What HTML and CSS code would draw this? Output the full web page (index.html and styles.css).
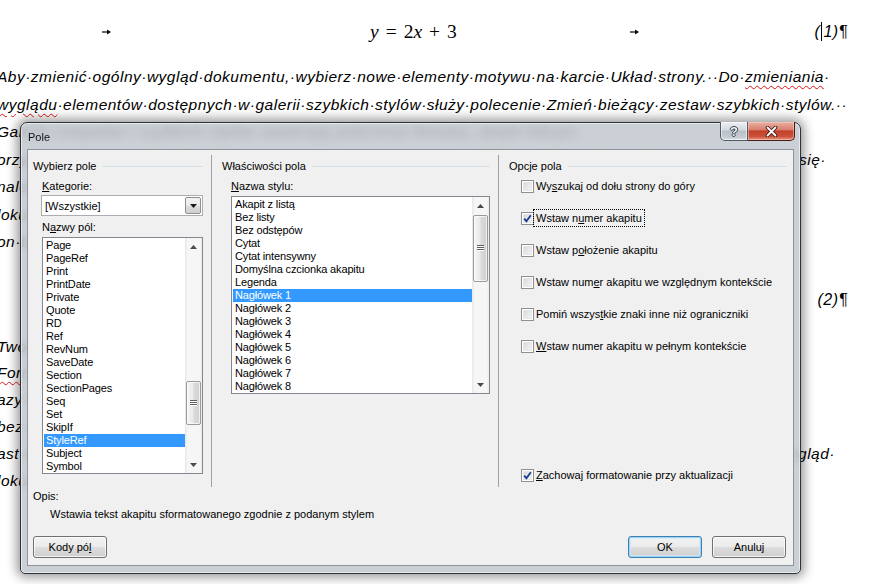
FILE: index.html
```html
<!DOCTYPE html>
<html lang="pl">
<head>
<meta charset="utf-8">
<title>Pole</title>
<link rel="stylesheet" href="styles.css">
</head>
<body>
<div class="doc">
  <div class="eq eq1">
    <span class="tab tab1"><svg width="9" height="6" viewBox="0 0 9 6"><path d="M0 3 H6" stroke="#000" stroke-width="1.2"/><path d="M5 0.5 L9 3 L5 5.5 Z" fill="#000"/></svg></span>
    <span class="math"><i>y</i><span class="op">=</span>2<i>x</i><span class="op">+</span>3</span>
    <span class="tab tab2"><svg width="9" height="6" viewBox="0 0 9 6"><path d="M0 3 H6" stroke="#000" stroke-width="1.2"/><path d="M5 0.5 L9 3 L5 5.5 Z" fill="#000"/></svg></span>
    <span class="num">(<span class="caret"></span>1)¶</span>
  </div>
  <div class="para p1">
    <div class="ln">Aby·zmienić·ogólny·wygląd·dokumentu,·wybierz·nowe·elementy·motywu·na·karcie·Układ·strony.··Do·<span class="sq">zmieniania</span>·</div>
    <div class="ln"><span class="sq">wyglądu</span>·elementów·dostępnych·w·galerii·szybkich·stylów·służy·polecenie·Zmień·bieżący·zestaw·szybkich·stylów.··</div>
    <div class="ln">Galerie·motywów·i·szybkich·stylów·zawierają·polecenia·Resetuj,·dzięki·którym·</div>
    <div class="ln split wa"><span>orzywrócić·pierwotny·wygląd·dokumentu·zawarty·w·bieżącym·szablonie,·kiedy·tylko·zechce</span><span>się·</span></div>
    <div class="ln">naleźć·w·galerii·odpowiedni·styl·dla·zaznaczonego·tekstu.·</div>
    <div class="ln">lokumentu·można·zmienić·za·pomocą·poleceń·karty·Narzędzia·główne.·</div>
    <div class="ln">on·bieżącego·motywu.¶</div>
  </div>
  <div class="eq eq2">
    <span class="num">(2)¶</span>
  </div>
  <div class="para p2">
    <div class="ln">Twoje·dokumenty·mogą·korzystać·z·wielu·stylów·i·motywów.·</div>
    <div class="ln"><span class="sq">Formatowanie</span>·tekstu·można·zmienić·bezpośrednio·na·karcie.·</div>
    <div class="ln">azy·elementów·z·galerii·szybkich·stylów.·</div>
    <div class="ln">bez·zmiany·układu·całego·dokumentu·i·jego·wyglądu.·</div>
    <div class="ln split wb"><span>ast·tego·możesz·przywrócić·pierwotny·w</span><span>ygląd·</span></div>
    <div class="ln">lokumentu·zawarty·w·bieżącym·szablonie.¶</div>
  </div>
</div>

<div class="dialog">
  <div class="titlebar">
    <span class="title">Pole</span>
    <div class="tb-btns">
      <div class="tb help"><span class="q">?</span></div>
      <div class="tb close">
        <svg width="13" height="11" viewBox="0 0 13 11"><path d="M2.5 1.5 L10.5 9.5 M10.5 1.5 L2.5 9.5" stroke="#3a1710" stroke-width="3.6" stroke-linecap="round"/><path d="M2.5 1.5 L10.5 9.5 M10.5 1.5 L2.5 9.5" stroke="#ffffff" stroke-width="1.8" stroke-linecap="round"/></svg>
      </div>
    </div>
  </div>
  <div class="client">
    <div class="cols">
      <div class="col col1">
        <div class="gh">Wybierz pole</div>
        <div class="lbl"><u>K</u>ategorie:</div>
        <div class="combo">
          <span class="combo-text">[Wszystkie]</span>
          <span class="combo-btn"><svg width="7" height="4" viewBox="0 0 7 4"><path d="M0 0 H7 L3.5 4 Z" fill="#1a1a1a"/></svg></span>
        </div>
        <div class="lbl lbl2">N<u>a</u>zwy pól:</div>
        <div class="list list1">
          <div class="items">
            <div class="it">Page</div>
            <div class="it">PageRef</div>
            <div class="it">Print</div>
            <div class="it">PrintDate</div>
            <div class="it">Private</div>
            <div class="it">Quote</div>
            <div class="it">RD</div>
            <div class="it">Ref</div>
            <div class="it">RevNum</div>
            <div class="it">SaveDate</div>
            <div class="it">Section</div>
            <div class="it">SectionPages</div>
            <div class="it">Seq</div>
            <div class="it">Set</div>
            <div class="it">SkipIf</div>
            <div class="it sel">StyleRef</div>
            <div class="it">Subject</div>
            <div class="it">Symbol</div>
          </div>
          <div class="sb">
            <div class="arr"><svg width="7" height="4" viewBox="0 0 7 4"><path d="M0 4 H7 L3.5 0 Z" fill="#4a4a4a"/></svg></div>
            <div class="track"><div class="thumb thumb1"><span class="grip"></span></div></div>
            <div class="arr"><svg width="7" height="4" viewBox="0 0 7 4"><path d="M0 0 H7 L3.5 4 Z" fill="#4a4a4a"/></svg></div>
          </div>
        </div>
      </div>

      <div class="col col2">
        <div class="gh">Właściwości pola</div>
        <div class="lbl"><u>N</u>azwa stylu:</div>
        <div class="list list2">
          <div class="items">
            <div class="it">Akapit z listą</div>
            <div class="it">Bez listy</div>
            <div class="it">Bez odstępów</div>
            <div class="it">Cytat</div>
            <div class="it">Cytat intensywny</div>
            <div class="it">Domyślna czcionka akapitu</div>
            <div class="it">Legenda</div>
            <div class="it sel">Nagłówek 1</div>
            <div class="it">Nagłówek 2</div>
            <div class="it">Nagłówek 3</div>
            <div class="it">Nagłówek 4</div>
            <div class="it">Nagłówek 5</div>
            <div class="it">Nagłówek 6</div>
            <div class="it">Nagłówek 7</div>
            <div class="it">Nagłówek 8</div>
          </div>
          <div class="sb">
            <div class="arr"><svg width="7" height="4" viewBox="0 0 7 4"><path d="M0 4 H7 L3.5 0 Z" fill="#4a4a4a"/></svg></div>
            <div class="track"><div class="thumb thumb2"><span class="grip"></span></div></div>
            <div class="arr"><svg width="7" height="4" viewBox="0 0 7 4"><path d="M0 0 H7 L3.5 4 Z" fill="#4a4a4a"/></svg></div>
          </div>
        </div>
      </div>

      <div class="col col3">
        <div class="gh">Opcje pola</div>
        <div class="opt first"><span class="cb"></span><span class="ol">Wy<u>s</u>zukaj od dołu strony do góry</span></div>
        <div class="opt"><span class="cb on"><svg width="9" height="9" viewBox="0 0 9 9"><path d="M1.2 4.6 L3.4 7.2 L7.8 1.2" fill="none" stroke="#1f3f8f" stroke-width="1.9"/></svg></span><span class="ol focus">Wstaw n<u>u</u>mer akapitu</span></div>
        <div class="opt"><span class="cb"></span><span class="ol">Wstaw p<u>o</u>łożenie akapitu</span></div>
        <div class="opt"><span class="cb"></span><span class="ol">Wstaw num<u>e</u>r akapitu we względnym kontekście</span></div>
        <div class="opt"><span class="cb"></span><span class="ol">Pomiń wszys<u>t</u>kie znaki inne niż ograniczniki</span></div>
        <div class="opt"><span class="cb"></span><span class="ol"><u>W</u>staw numer akapitu w pełnym kontekście</span></div>
        <div class="opt last"><span class="cb on"><svg width="9" height="9" viewBox="0 0 9 9"><path d="M1.2 4.6 L3.4 7.2 L7.8 1.2" fill="none" stroke="#1f3f8f" stroke-width="1.9"/></svg></span><span class="ol"><u>Z</u>achowaj formatowanie przy aktualizacji</span></div>
      </div>
    </div>

    <div class="opis">Opis:</div>
    <div class="desc">Wstawia tekst akapitu sformatowanego zgodnie z podanym stylem</div>

    <div class="btnrow">
      <button class="btn">Kody pó<u>l</u></button>
      <button class="btn ok">OK</button>
      <button class="btn">Anuluj</button>
    </div>
  </div>
</div>
</body>
</html>
```

FILE: styles.css
```css
html, body {
  margin: 0;
  padding: 0;
}
body {
  width: 881px;
  height: 584px;
  overflow: hidden;
  background: #ffffff;
  position: relative;
  font-family: "Liberation Sans", Arial, sans-serif;
}

/* ---------- document behind ---------- */
.doc {
  width: 848px;
  padding-top: 18px;
  color: #000;
  font-family: "Liberation Sans", Arial, sans-serif;
  font-style: italic;
  font-size: 15.5px;
  letter-spacing: 0.5px;
}
.eq {
  display: flex;
  align-items: center;
  height: 28px;
  line-height: 28px;
  white-space: nowrap;
}
.tab {
  display: inline-flex;
  align-items: center;
  width: 9px;
}
.tab svg { display: block; }
.tab1 { margin-left: 102px; }
.math {
  margin-left: 259px;
  font-family: "Liberation Serif", serif;
  font-style: normal;
  font-size: 19.5px;
  letter-spacing: 0;
}
.math i { font-style: italic; }
.op { margin: 0 7px; }
.tab2 { margin-left: 173px; }
.num {
  margin-left: auto;
  font-size: 16px;
  letter-spacing: 0.6px;
}
.caret {
  display: inline-block;
  width: 1px;
  height: 19px;
  background: #000;
  vertical-align: -4px;
  margin: 0 1px;
}
.para {
  margin-left: -3px;
  white-space: nowrap;
}
.p1 {
  margin-top: 17px;
  line-height: 27.5px;
}
.eq2 {
  margin-top: 30px;
}
.p2 {
  margin-top: 20px;
  line-height: 26.9px;
}
.ln.split {
  display: flex;
  justify-content: space-between;
}
.wa { width: 829px; }
.wb { width: 838px; }
.sq {
  text-decoration: underline wavy #e01010;
  text-decoration-thickness: 1px;
  text-underline-offset: 3px;
}

/* ---------- dialog ---------- */
.dialog {
  position: absolute;
  left: 20px;
  top: 122px;
  width: 781px;
  height: 452px;
  box-sizing: border-box;
  border: 1px solid #2d323a;
  border-radius: 7px 7px 5px 5px;
  background: rgba(192, 198, 205, 0.82);
  -webkit-backdrop-filter: blur(5px);
  backdrop-filter: blur(5px);
  box-shadow: 0 0 11px 3px rgba(0, 0, 0, 0.42), inset 0 0 0 1px rgba(255, 255, 255, 0.55);
  padding: 0 6px 7px 6px;
  display: flex;
  flex-direction: column;
  font-size: 11px;
  color: #000;
  letter-spacing: 0;
}
.titlebar {
  height: 26px;
  flex: none;
  display: flex;
  align-items: flex-start;
}
.title {
  margin: 7px 0 0 1px;
  font-size: 11px;
  line-height: 14px;
  color: #111;
}
.tb-btns {
  margin-left: auto;
  margin-top: -1px;
  margin-right: -1px;
  display: flex;
}
.tb {
  height: 19px;
  box-sizing: border-box;
  display: flex;
  align-items: center;
  justify-content: center;
}
.help {
  width: 28px;
  border: 1px solid #535a63;
  border-top: none;
  border-radius: 0 0 0 5px;
  background: linear-gradient(#eef0f3 0%, #d3d8de 45%, #b9c0c8 50%, #c6ccd3 85%, #dfe3e7 100%);
  box-shadow: inset 0 0 0 1px rgba(255, 255, 255, 0.55);
}
.q {
  font-weight: bold;
  font-size: 13px;
  color: #f2f2f2;
  text-shadow: 1px 0 #3a4350, -1px 0 #3a4350, 0 1px #3a4350, 0 -1px #3a4350;
  line-height: 13px;
}
.close {
  width: 47px;
  border: 1px solid #4a1c14;
  border-top: none;
  border-left: none;
  border-radius: 0 0 5px 0;
  background: linear-gradient(#eab0a3 0%, #d9806f 42%, #c2412b 50%, #cc5039 80%, #e39a85 100%);
  box-shadow: inset 0 0 0 1px rgba(255, 220, 210, 0.45);
}
.close svg { display: block; }

.client {
  flex: 1;
  border: 1px solid #8c939b;
  background: #f0f0f0;
  display: flex;
  flex-direction: column;
}
.cols {
  display: flex;
  margin-top: 5px;
  height: 332px;
  flex: none;
}
.col {
  box-sizing: border-box;
  display: flex;
  flex-direction: column;
  padding-top: 4px;
}
.col1 {
  width: 184px;
  border-right: 1px solid #a0a0a0;
  padding-left: 5px;
  padding-right: 8px;
}
.col2 {
  width: 287px;
  border-right: 1px solid #a0a0a0;
  padding-left: 10px;
  padding-right: 8px;
}
.col3 {
  flex: 1;
  padding-left: 10px;
  padding-right: 6px;
  padding-bottom: 5px;
}
.gh {
  display: flex;
  align-items: center;
  height: 14px;
  line-height: 14px;
  white-space: nowrap;
}
.gh::after {
  content: "";
  flex: 1;
  height: 1px;
  background: #d5dfe5;
  margin-left: 6px;
}
.lbl {
  margin-top: 6px;
  padding-left: 9px;
  line-height: 14px;
  height: 14px;
}
.lbl2 { margin-top: 4px; }
u { text-decoration: underline; text-underline-offset: 1px; }

.combo {
  margin: 2px 0 0 8px;
  width: 162px;
  height: 21px;
  box-sizing: border-box;
  border: 1px solid #abadb3;
  background: #fff;
  display: flex;
  align-items: center;
  padding: 1px;
}
.combo-text { padding-left: 2px; line-height: 14px; }
.combo-btn {
  margin-left: auto;
  width: 16px;
  height: 17px;
  box-sizing: border-box;
  border: 1px solid #8e8f8f;
  border-radius: 2px;
  background: linear-gradient(#f2f2f2 0%, #ebebeb 50%, #dddddd 51%, #cfcfcf 100%);
  display: flex;
  align-items: center;
  justify-content: center;
}
.combo-btn svg { display: block; }

.list {
  box-sizing: border-box;
  border: 1px solid #828790;
  background: #fff;
  display: flex;
}
.list1 {
  margin: 3px 0 0 9px;
  width: 161px;
  height: 237px;
}
.list2 {
  margin: 3px 0 0 9px;
  width: 259px;
  height: 198px;
}
.items {
  flex: 1;
  padding: 1px 0 0 1px;
  overflow: hidden;
  min-width: 0;
}
.it {
  height: 13px;
  line-height: 13px;
  padding-left: 2px;
  white-space: nowrap;
  letter-spacing: -0.15px;
}
.it.sel {
  background: #3399ff;
  color: #fff;
}
.sb {
  width: 17px;
  flex: none;
  display: flex;
  flex-direction: column;
  background: linear-gradient(to right, #e6e6e6 0%, #f6f6f6 15%, #f6f6f6 85%, #ececec 100%);
}
.arr {
  height: 17px;
  flex: none;
  display: flex;
  align-items: center;
  justify-content: center;
}
.arr svg { display: block; }
.track {
  flex: 1;
  display: flex;
  flex-direction: column;
}
.thumb {
  margin: 0 1px;
  box-sizing: border-box;
  border: 1px solid #9a9a9a;
  border-radius: 2px;
  background: linear-gradient(to right, #f6f6f6 0%, #e9e9e9 45%, #dadada 55%, #d0d0d0 100%);
  box-shadow: inset 0 0 0 1px rgba(255, 255, 255, 0.7);
  display: flex;
  align-items: center;
  justify-content: center;
}
.thumb1 { margin-top: 126px; height: 44px; }
.thumb2 { margin-top: 1px; height: 67px; }
.grip {
  width: 7px;
  height: 7px;
  background: linear-gradient(#5e5e5e 0 1px, #fff 1px 2px, #5e5e5e 2px 3px, #fff 3px 4px, #5e5e5e 4px 5px, #fff 5px 6px, transparent 6px);
}

.opt {
  display: flex;
  align-items: center;
  height: 14px;
  margin-top: 18px;
  padding-left: 12px;
  white-space: nowrap;
}
.opt.first { margin-top: 6px; }
.opt.last { margin-top: auto; }
.cb {
  width: 13px;
  height: 13px;
  box-sizing: border-box;
  border: 1px solid #8e8f8f;
  background: linear-gradient(135deg, #cdd1d6 0%, #e6e8ea 50%, #f8f8f8 100%);
  box-shadow: inset 0 0 0 1px #ffffff, inset 0 0 0 2px #e4e6e8;
  margin-right: 1px;
  flex: none;
  display: flex;
  align-items: center;
  justify-content: center;
}
.cb svg { display: block; }
.ol { line-height: 14px; padding: 0 1px; }
.ol.focus {
  outline: 1px dotted #000;
  outline-offset: 1px;
}

.opis {
  margin-top: 2px;
  padding-left: 5px;
  line-height: 14px;
}
.desc {
  margin-top: 4px;
  padding-left: 22px;
  line-height: 14px;
}
.btnrow {
  margin-top: 15px;
  display: flex;
  gap: 10px;
  padding: 0 7px 0 5px;
}
.btn {
  width: 74px;
  height: 22px;
  box-sizing: border-box;
  border: 1px solid #707070;
  border-radius: 3px;
  background: linear-gradient(#f2f2f2 0%, #ebebeb 50%, #dddddd 51%, #cfcfcf 100%);
  box-shadow: inset 0 0 0 1px rgba(255, 255, 255, 0.75);
  font-family: "Liberation Sans", Arial, sans-serif;
  font-size: 11px;
  color: #000;
  padding: 0;
  line-height: 14px;
}
.btn:first-child { margin-right: auto; }
.btn.ok {
  border-color: #3c7fb1;
  box-shadow: inset 0 0 0 1px #9fd5f5, inset 0 0 0 2px rgba(200, 235, 252, 0.6);
}
```
